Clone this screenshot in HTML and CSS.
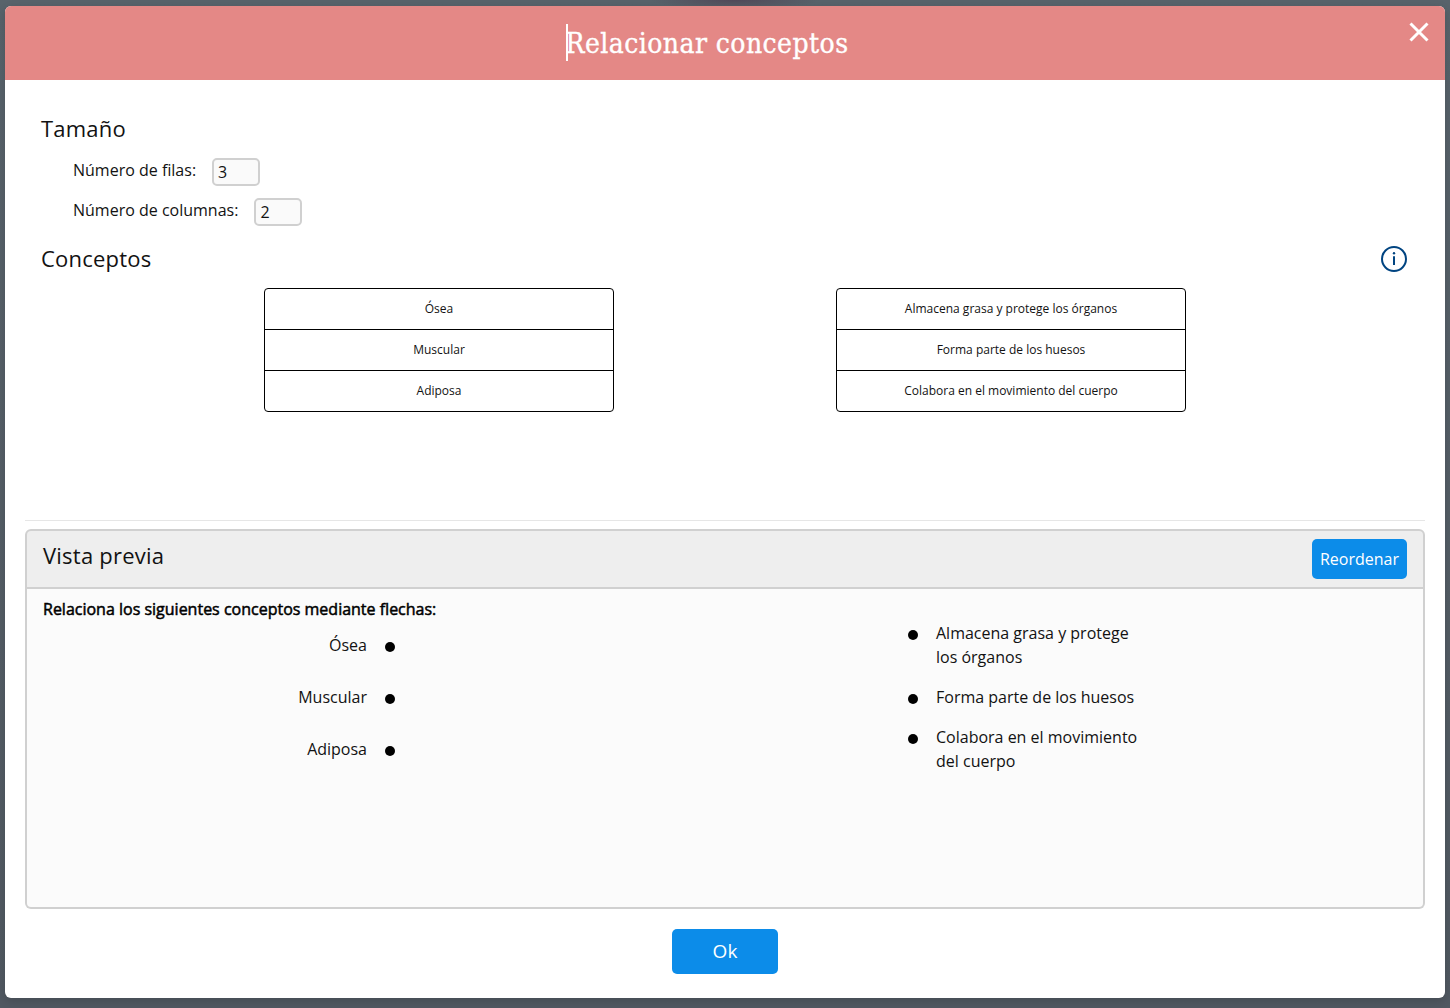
FILE: index.html
```html
<!DOCTYPE html>
<html lang="es">
<head>
<meta charset="utf-8">
<title>Relacionar conceptos</title>
<link rel="stylesheet" href="styles.css">
</head>
<body>
<main class="modal">
  <header class="modal-header">
    <h1 class="title"><span class="caret"></span><span class="title-text">Relacionar conceptos</span></h1>
    <button class="close" aria-label="Cerrar"><svg width="20" height="20" viewBox="0 0 20 20"><path d="M1.5 1.5 18.5 18.5M18.5 1.5 1.5 18.5" stroke="#fff" stroke-width="3" fill="none"/></svg></button>
  </header>
  <section class="settings">
    <h2 class="section-title">Tamaño</h2>
    <div class="field"><label for="rows">Número de filas:</label><input id="rows" value="3"></div>
    <div class="field"><label for="cols">Número de columnas:</label><input id="cols" value="2"></div>
    <div class="concepts-heading">
      <h2 class="section-title">Conceptos</h2>
      <svg class="info" width="28" height="28" viewBox="0 0 28 28"><circle cx="14" cy="14" r="12" fill="none" stroke="#004481" stroke-width="2"/><circle cx="14" cy="8.2" r="1.2" fill="#004481"/><path d="M14 11.2V20" stroke="#004481" stroke-width="2"/></svg>
    </div>
    <div class="concepts">
      <ul class="concept-box"><li>Ósea</li><li>Muscular</li><li>Adiposa</li></ul>
      <ul class="concept-box"><li>Almacena grasa y protege los órganos</li><li>Forma parte de los huesos</li><li>Colabora en el movimiento del cuerpo</li></ul>
    </div>
  </section>
  <section class="preview">
    <header class="preview-header">
      <h2 class="section-title">Vista previa</h2>
      <button class="reorder">Reordenar</button>
    </header>
    <p class="statement">Relaciona los siguientes conceptos mediante flechas:</p>
    <div class="match">
      <ul class="left"><li><span>Ósea</span><i class="dot"></i></li><li><span>Muscular</span><i class="dot"></i></li><li><span>Adiposa</span><i class="dot"></i></li></ul>
      <ul class="right"><li><i class="dot"></i><span>Almacena grasa y protege los órganos</span></li><li><i class="dot"></i><span>Forma parte de los huesos</span></li><li><i class="dot"></i><span>Colabora en el movimiento del cuerpo</span></li></ul>
    </div>
  </section>
  <footer class="modal-footer"><button class="ok">Ok</button></footer>
</main>
</body>
</html>
```
FILE: styles.css
```css
* { box-sizing: border-box; }
body {
  margin: 0;
  height: 1008px;
  padding: 6px 5px 10px;
  overflow: hidden;
  background: radial-gradient(ellipse 85px 9px at 735px 0, #514959, transparent), linear-gradient(#58636b, #505861);
  font: 16px/24px "Open Sans", sans-serif;
  color: #121212;
}
h1, h2, p, ul { margin: 0; padding: 0; font-weight: 400; }
ul { list-style: none; }
button { border: 0; padding: 0; font: inherit; color: #fff; }
.modal {
  height: 992px;
  display: flex;
  flex-direction: column;
  overflow: hidden;
  background: #fff;
  border-radius: 6px;
  box-shadow: 0 3px 10px rgba(0, 0, 0, .15);
}
.modal-header {
  flex: none;
  height: 74px;
  display: flex;
  background: #e48886;
}
.title {
  flex: 1;
  display: flex;
  justify-content: center;
  align-items: flex-start;
  padding-top: 18px;
  font: 28px/37px "Roboto Slab", "DejaVu Serif Condensed", "DejaVu Serif", serif;
  font-stretch: condensed;
  letter-spacing: .43px;
  color: #fff;
  -webkit-text-stroke: .35px #fff;
}
.title-text { padding-top: 1px; }
.caret { width: 2px; height: 37px; margin-right: -2px; background: #fff; }
.close {
  width: 36px;
  height: 36px;
  padding: 16px 16px 0 0;
  background: none;
}
.close svg { display: block; }
.settings { flex: none; height: 440px; padding: 32px 36px 0; }
.section-title { font-size: 22px; line-height: 32px; letter-spacing: .22px; }
.field {
  height: 40px;
  padding: 0 32px;
  display: flex;
  align-items: flex-start;
  gap: 16px;
}
.section-title + .field { margin-top: 14px; }
.field label { line-height: 24px; }
.field input {
  width: 48px;
  height: 28px;
  padding: 0 4px;
  border: 2px solid #d0d0d0;
  border-radius: 5px;
  background: #fafafa;
  font: inherit;
  color: #121212;
}
.concepts-heading { display: flex; justify-content: space-between; margin-top: 4px; }
.info { margin-top: 3px; margin-right: 1px; }
.concepts { display: flex; justify-content: space-between; padding: 14px 223px 0; }
.concept-box {
  width: 350px;
  border: 1px solid #000;
  border-radius: 4px;
  font-size: 12px;
  line-height: 40px;
  text-align: center;
}
.concept-box li + li { border-top: 1px solid #000; }
.preview {
  flex: none;
  height: 389px;
  margin: 0 20px;
  border-top: 1px solid #e6e6e6;
  display: flex;
  flex-direction: column;
}
.preview-header {
  height: 60px;
  margin-top: 8px;
  padding: 8px 16px 0;
  display: flex;
  justify-content: space-between;
  align-items: flex-start;
  border: 2px solid #d0d0d0;
  border-radius: 6px 6px 0 0;
  background: #eee;
}
.reorder { width: 95px; height: 40px; border-radius: 5px; background: #0c8ce9; }
.statement {
  padding: 8px 16px 0;
  border: 2px solid #d0d0d0;
  border-width: 0 2px;
  background: #fbfbfb;
  color: #000;
  -webkit-text-stroke: .5px #000;
}
.match {
  flex: 1;
  display: flex;
  border: 2px solid #d0d0d0;
  border-top: 0;
  border-radius: 0 0 6px 6px;
  background: #fbfbfb;
}
.left { width: 368px; padding-top: 12px; }
.left li { height: 52px; display: flex; justify-content: flex-end; gap: 18px; }
.right { width: 242px; margin-left: 513px; }
.right li { display: flex; gap: 18px; margin-bottom: 16px; }
.dot { flex: none; width: 10px; height: 10px; margin-top: 9px; border-radius: 50%; background: #000; }
.modal-footer { display: flex; justify-content: center; padding-top: 20px; }
.ok { width: 106px; height: 45px; padding-bottom: 2px; border-radius: 5px; background: #0c8ce9; font-size: 19px; }
```
